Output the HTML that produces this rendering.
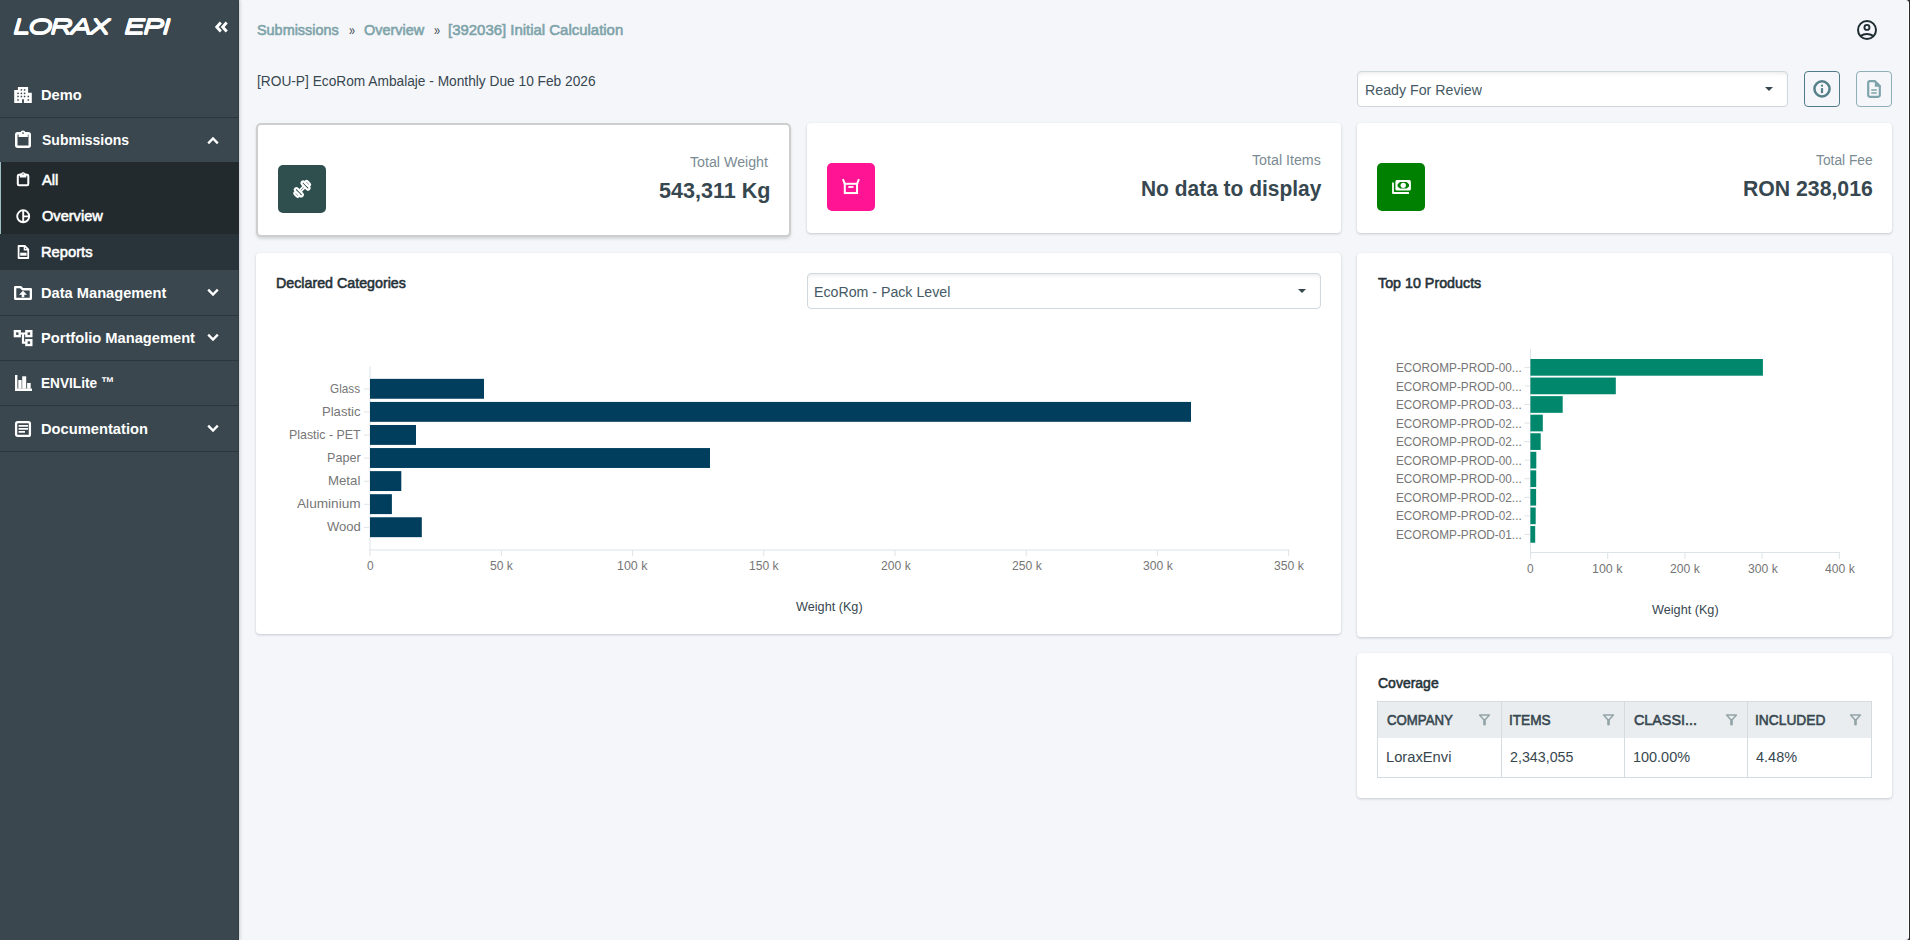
<!DOCTYPE html>
<html lang="en">
<head>
<meta charset="utf-8">
<title>LORAX EPI - Submission Overview</title>
<style>
*{box-sizing:border-box;margin:0;padding:0}
html,body{width:1910px;height:940px;overflow:hidden;background:#f5f6fa;font-family:"Liberation Sans",sans-serif}
body{position:relative}
.abs{position:absolute}
.t{position:absolute;white-space:nowrap;line-height:20px;transform-origin:0 50%;display:block}
svg{position:absolute;overflow:visible}
/* sidebar */
#side{position:absolute;left:0;top:0;width:239px;height:940px;background:#3a474e;box-shadow:inset -1px 0 0 rgba(20,30,36,.22),1px 0 3px rgba(40,50,60,.22)}
.sep{position:absolute;left:0;width:239px;height:1px;background:#2a373e}
#sub-active{position:absolute;left:0;top:162px;width:239px;height:72px;background:#232a2e;border-left:1px solid #9dbcc4}
#sub-rest{position:absolute;left:0;top:234px;width:239px;height:36px;background:#28333a}
/* cards */
.card{position:absolute;background:#fff;border-radius:4px;box-shadow:0 1px 3px rgba(60,70,90,.16),0 1px 2px rgba(60,70,90,.10)}
.card.sel{border:2px solid #cecece;border-radius:5px;box-shadow:0 2px 3px rgba(0,0,0,.13)}
.ico{position:absolute;width:48px;height:48px;border-radius:5px}
.select{position:absolute;height:36px;background:#fff;border:1px solid #cfd8dc;border-radius:4px;box-shadow:inset 0 3px 4px -2px rgba(0,0,0,.10)}
.caret{position:absolute;width:0;height:0;border-left:4.3px solid transparent;border-right:4.3px solid transparent;border-top:4.8px solid #37474f}
.btn{position:absolute;width:36px;height:36px;border-radius:4px;background:#f5f6fa}
/* table */
#tbl{position:absolute;left:1377px;top:701px;width:495px;height:77px;border:1px solid #d5dce0;background:#fff}
#tbl .hd{position:absolute;left:0;top:0;width:493px;height:36px;background:#e9edef}
#tbl .v{position:absolute;top:0;width:1px;height:75px;background:#d5dce0}
</style>
</head>
<body>

<!-- ================= SIDEBAR ================= -->
<nav id="side">
  <span class="t logo" style="left:12.91px;top:17px;font-size:22px;font-weight:normal;color:#ffffff;transform:scaleX(1.4282);font-style:italic;letter-spacing:-1.6px;text-shadow:0 .7px 0 #fff,0 -.7px 0 #fff;-webkit-text-stroke:0.3px #ffffff;">LORAX</span>
  <svg style="left:214px;top:20px" width="15" height="14" viewBox="0 0 15 14"><path d="M6.800 2.600 2.800 7l4 4.400M12.700 2.600 8.700 7l4 4.400" fill="none" stroke="#fff" stroke-width="2.900"/></svg>

  <!-- Demo -->
  <svg style="left:14px;top:87px" width="18" height="16" viewBox="0 0 18 16"><path d="M3.900 0h10.200v5.800h3.700V16H0.200V2.900h3.700z" fill="#fff"/><g fill="#3a474e"><rect x="6.65" y="2.15" width="1.500" height="1.500"/><rect x="9.85" y="2.15" width="1.500" height="1.500"/><rect x="3.25" y="5.65" width="1.500" height="1.500"/><rect x="6.65" y="5.65" width="1.500" height="1.500"/><rect x="9.85" y="5.65" width="1.500" height="1.500"/><rect x="3.25" y="8.75" width="1.500" height="1.500"/><rect x="6.65" y="8.75" width="1.500" height="1.500"/><rect x="9.85" y="8.75" width="1.500" height="1.500"/><rect x="13.55" y="8.75" width="1.500" height="1.500"/><rect x="3.25" y="12.25" width="1.500" height="1.500"/><rect x="13.55" y="12.25" width="1.500" height="1.500"/><rect x="8.100" y="12.200" width="1.800" height="3.800"/></g></svg>
  <span class="t" style="left:40.65px;top:85px;font-size:15.4px;font-weight:bold;color:#ffffff;transform:scaleX(0.9526);">Demo</span>
  <div class="sep" style="top:117px"></div>

  <!-- Submissions -->
  <svg style="left:15px;top:130px" width="16" height="18" viewBox="0 0 16 18"><rect x="1.250" y="3.150" width="13.500" height="13.600" rx="1.500" fill="none" stroke="#fff" stroke-width="2.500"/><path d="M3.600 2.400h1.800a2.700 2.700 0 0 1 5.200 0h2.200V7H3.600z" fill="#fff"/><circle cx="8" cy="3.100" r="0.850" fill="#3a474e"/></svg>
  <span class="t" style="left:41.60px;top:130px;font-size:15.4px;font-weight:bold;color:#ffffff;transform:scaleX(0.9094);">Submissions</span>
  <svg style="left:207px;top:136px" width="12" height="9" viewBox="0 0 12 9"><path d="M1.2 7.4 6 2.4l4.8 5" fill="none" stroke="#fff" stroke-width="2.3"/></svg>

  <div id="sub-active"></div>
  <div id="sub-rest"></div>
  <!-- All -->
  <svg style="left:16px;top:172px" width="14" height="14" viewBox="0 0 14 14"><rect x="1.800" y="2.800" width="10.500" height="10.400" rx="1.200" fill="none" stroke="#fff" stroke-width="2"/><path d="M3.800 1.400h1.400a2 2 0 0 1 3.700 0h1.400V5.600H3.800z" fill="#fff"/><circle cx="7.050" cy="2.100" r="0.650" fill="#232a2e"/></svg>
  <span class="t" style="left:41.59px;top:170px;font-size:15.4px;font-weight:normal;color:#ffffff;transform:scaleX(0.9546);-webkit-text-stroke:0.6px #ffffff;">All</span>
  <!-- Overview -->
  <svg style="left:16px;top:209px" width="15" height="15" viewBox="0 0 15 15"><circle cx="7.200" cy="7.300" r="6" fill="none" stroke="#fff" stroke-width="1.900"/><path d="M7.200 1.300v12M7.200 7.400h6" fill="none" stroke="#fff" stroke-width="1.900"/></svg>
  <span class="t" style="left:41.88px;top:206px;font-size:15.4px;font-weight:normal;color:#ffffff;transform:scaleX(0.9478);-webkit-text-stroke:0.6px #ffffff;">Overview</span>
  <!-- Reports -->
  <svg style="left:17px;top:245px" width="13" height="14" viewBox="0 0 13 14"><path d="M1.6 1h6.2l3.4 3.4V13H1.6z" fill="none" stroke="#fff" stroke-width="1.8" stroke-linejoin="round"/><path d="M7.4 1v3.8h3.8" fill="none" stroke="#fff" stroke-width="1.4"/><rect x="3.200" y="7.700" width="6.400" height="3" fill="#fff"/></svg>
  <span class="t" style="left:40.93px;top:242px;font-size:15.4px;font-weight:normal;color:#ffffff;transform:scaleX(0.9555);-webkit-text-stroke:0.6px #ffffff;">Reports</span>

  <!-- Data Management -->
  <svg style="left:14px;top:286px" width="18" height="14" viewBox="0 0 18 14"><path d="M1.150 1.150h5.500l2 2.100h8.200v9.600H1.150z" fill="none" stroke="#fff" stroke-width="2.300" stroke-linejoin="round"/><path d="M9 4.700l4 4.100h-2.700v2.400H7.700V8.800H5z" fill="#fff"/></svg>
  <span class="t" style="left:40.65px;top:283px;font-size:15.4px;font-weight:bold;color:#ffffff;transform:scaleX(0.9511);">Data Management</span>
  <svg style="left:207px;top:288px" width="12" height="9" viewBox="0 0 12 9"><path d="M1.2 1.6 6 6.6l4.8-5" fill="none" stroke="#fff" stroke-width="2.3"/></svg>
  <div class="sep" style="top:315px"></div>

  <!-- Portfolio Management -->
  <svg style="left:14px;top:330px" width="19" height="17" viewBox="0 0 19 17"><g fill="none" stroke="#fff" stroke-width="2.400"><rect x="0.900" y="1.200" width="4.800" height="4.900"/><rect x="12.400" y="1.200" width="4.900" height="4.900"/><rect x="12.400" y="10.200" width="4.900" height="4.800"/><path d="M6.500 3.500h5.500M9 3.500v9.200h3.200" stroke-width="2.200"/></g></svg>
  <span class="t" style="left:40.65px;top:328px;font-size:15.4px;font-weight:bold;color:#ffffff;transform:scaleX(0.9527);">Portfolio Management</span>
  <svg style="left:207px;top:333px" width="12" height="9" viewBox="0 0 12 9"><path d="M1.2 1.6 6 6.6l4.8-5" fill="none" stroke="#fff" stroke-width="2.3"/></svg>
  <div class="sep" style="top:360px"></div>

  <!-- ENVILite -->
  <svg style="left:14.500px;top:375px" width="18" height="17" viewBox="0 0 18 17"><path d="M1.200 0v14.800h15.800" fill="none" stroke="#fff" stroke-width="2.400"/><rect x="3.300" y="5" width="3.300" height="8.700" fill="#fff"/><rect x="7.200" y="1.300" width="4" height="12.400" fill="#fff"/><rect x="12.100" y="8" width="3.600" height="5.700" fill="#fff"/></svg>
  <span class="t" style="left:40.71px;top:373px;font-size:15.4px;font-weight:bold;color:#ffffff;transform:scaleX(0.8863);">ENVILite ™</span>
  <div class="sep" style="top:405px"></div>

  <!-- Documentation -->
  <svg style="left:15px;top:421px" width="16" height="16" viewBox="0 0 16 16"><rect x="1.100" y="1.200" width="13.800" height="13.700" rx="1.500" fill="none" stroke="#fff" stroke-width="2.300"/><path d="M3.600 4.900h9.400M3.600 7.900h9.400M3.600 10.900h6.400" fill="none" stroke="#fff" stroke-width="1.900"/></svg>
  <span class="t" style="left:40.65px;top:419px;font-size:15.4px;font-weight:bold;color:#ffffff;transform:scaleX(0.9547);">Documentation</span>
  <svg style="left:207px;top:424px" width="12" height="9" viewBox="0 0 12 9"><path d="M1.2 1.6 6 6.6l4.8-5" fill="none" stroke="#fff" stroke-width="2.3"/></svg>
  <div class="sep" style="top:451px"></div>
</nav>

<!-- ================= HEADER ================= -->
<header>
  <span class="t" style="left:257.28px;top:20px;font-size:15.4px;font-weight:normal;color:#7ea3a9;transform:scaleX(0.9359);-webkit-text-stroke:0.6px #7ea3a9;">Submissions</span><span class="t" style="left:348.70px;top:20px;font-size:15px;font-weight:normal;color:#37474f;transform:scaleX(0.7250);">»</span><span class="t" style="left:363.68px;top:20px;font-size:15.4px;font-weight:normal;color:#7ea3a9;transform:scaleX(0.9371);-webkit-text-stroke:0.6px #7ea3a9;">Overview</span><span class="t" style="left:434.10px;top:20px;font-size:15px;font-weight:normal;color:#37474f;transform:scaleX(0.7375);">»</span><span class="t" style="left:448.22px;top:20px;font-size:15.4px;font-weight:normal;color:#7ea3a9;transform:scaleX(0.9706);-webkit-text-stroke:0.6px #7ea3a9;">[392036] Initial Calculation</span>
  <svg style="left:1856px;top:19px" width="22" height="22" viewBox="0 0 22 22"><circle cx="11" cy="11" r="9" fill="none" stroke="#1f2d33" stroke-width="2"/><circle cx="10.950" cy="8.400" r="2.500" fill="none" stroke="#1f2d33" stroke-width="1.900"/><path d="M4.300 17.100Q10.950 12.700 17.600 17.100" fill="none" stroke="#1f2d33" stroke-width="2"/></svg>
  <span class="t" style="left:256.70px;top:71px;font-size:15.2px;font-weight:normal;color:#37474f;transform:scaleX(0.9033);">[ROU-P] EcoRom Ambalaje - Monthly Due 10 Feb 2026</span>
  <div class="select" style="left:1357px;top:71px;width:431px"></div>
  <span class="t" style="left:1365.26px;top:80px;font-size:15.2px;font-weight:normal;color:#455a64;transform:scaleX(0.9359);">Ready For Review</span>
  <div class="caret" style="left:1764.8px;top:87px"></div>
  <div class="btn" style="left:1804px;top:71px;border:1px solid #4f7c86"></div>
  <svg style="left:1812px;top:79px" width="20" height="20" viewBox="0 0 20 20"><circle cx="10" cy="9.900" r="7.550" fill="none" stroke="#55808a" stroke-width="2.500"/><rect x="8.900" y="9.100" width="2.200" height="5" fill="#55808a"/><circle cx="10" cy="6.650" r="1.150" fill="#55808a"/></svg>
  <div class="btn" style="left:1856px;top:71px;border:1px solid #8fb0b6"></div>
  <svg style="left:1866px;top:80px" width="16" height="18" viewBox="0 0 16 18"><path d="M3.600 1.200h5.400l4.800 4.800v9.200a1.600 1.600 0 0 1-1.600 1.600H3.800a1.600 1.600 0 0 1-1.600-1.600V2.800a1.600 1.600 0 0 1 1.400-1.600z" fill="none" stroke="#7ea4ab" stroke-width="2.200" stroke-linejoin="round"/><path d="M8.800 0.300l6 6v0.500h-6z" fill="#7ea4ab"/><path d="M5.200 9.900h5.600M5.200 13h5.600" stroke="#7ea4ab" stroke-width="1.500"/></svg>
</header>

<!-- ================= KPI CARDS ================= -->
<section class="card sel" style="left:256px;top:123px;width:535px;height:114px"></section>
<div class="ico" style="left:278px;top:165px;background:#2f4f4f"></div>
<svg style="left:293px;top:180px" width="18" height="18" viewBox="-9 -9 18 18"><g transform="translate(0.2 -0.1) rotate(-45) scale(1.09)" fill="none" stroke="#fff" stroke-width="2" stroke-linejoin="round"><rect x="-5.800" y="-4.600" width="2.900" height="9.200" rx="1.300"/><rect x="2.900" y="-4.600" width="2.900" height="9.200" rx="1.300"/><rect x="-8.300" y="-2.600" width="2.500" height="5.200" rx="1.100"/><rect x="5.800" y="-2.600" width="2.500" height="5.200" rx="1.100"/><path d="M-2.900 -1h5.800M-2.900 1h5.800" stroke-width="1.500"/></g></svg>
<span class="t" style="left:690.30px;top:152px;font-size:15.2px;font-weight:normal;color:#7b8b93;transform:scaleX(0.9361);">Total Weight</span><span class="t" style="left:658.90px;top:181px;font-size:22px;font-weight:bold;color:#37474f;transform:scaleX(0.9803);">543,311 Kg</span>

<section class="card" style="left:807px;top:123px;width:534px;height:110px"></section>
<div class="ico" style="left:827px;top:163px;background:#ff1493"></div>
<svg style="left:842px;top:178px" width="18" height="17" viewBox="0 0 18 17"><rect x="2.800" y="5.800" width="12.250" height="9.250" fill="none" stroke="#fff" stroke-width="2"/><path d="M2.900 6.200 0.900 1.100M14.950 6.200l2-5.100" fill="none" stroke="#fff" stroke-width="2"/><path d="M6.300 9h5.200" stroke="#fff" stroke-width="1.800"/></svg>
<span class="t" style="left:1252.10px;top:150px;font-size:15.2px;font-weight:normal;color:#7b8b93;transform:scaleX(0.9372);">Total Items</span><span class="t" style="left:1140.57px;top:179px;font-size:22.6px;font-weight:bold;color:#37474f;transform:scaleX(0.9267);">No data to display</span>

<section class="card" style="left:1357px;top:123px;width:535px;height:110px"></section>
<div class="ico" style="left:1377px;top:163px;background:#008000"></div>
<svg style="left:1391px;top:180px" width="21" height="14" viewBox="0 0 21 14"><rect x="4.400" y="0.100" width="15.500" height="10.500" rx="1.600" fill="#fff"/><path d="M9 2.100h6.600l2.400 2.100v2.200l-2.400 2.100H9L6.600 6.400V4.200z" fill="#008000"/><circle cx="12.250" cy="5.350" r="2.650" fill="#fff"/><path d="M2 2.500V13h16" fill="none" stroke="#fff" stroke-width="1.800" stroke-linejoin="round"/></svg>
<span class="t" style="left:1815.60px;top:150px;font-size:15.2px;font-weight:normal;color:#7b8b93;transform:scaleX(0.9077);">Total Fee</span><span class="t" style="left:1742.66px;top:179px;font-size:22.6px;font-weight:bold;color:#37474f;transform:scaleX(0.9393);">RON 238,016</span>

<!-- ================= DECLARED CATEGORIES ================= -->
<section class="card" style="left:256px;top:253px;width:1085px;height:381px"></section>
<span class="t" style="left:276.44px;top:273px;font-size:15.2px;font-weight:normal;color:#263238;transform:scaleX(0.9382);-webkit-text-stroke:0.6px #263238;">Declared Categories</span>
<div class="select" style="left:807px;top:273px;width:514px"></div>
<span class="t" style="left:814.47px;top:282px;font-size:15.2px;font-weight:normal;color:#455a64;transform:scaleX(0.9333);">EcoRom - Pack Level</span>
<div class="caret" style="left:1298px;top:289.200px"></div>
<svg style="left:256px;top:253px" width="1085" height="381" viewBox="256 253 1085 381">
  <g fill="#dde4e7">
    <rect x="369.500" y="366.500" width="1" height="189.500"/>
    <rect x="369.500" y="549.500" width="920" height="1"/>
    <rect x="364" y="388.40" width="5.500" height="1"/><rect x="364" y="411.47" width="5.500" height="1"/><rect x="364" y="434.54" width="5.500" height="1"/><rect x="364" y="457.61" width="5.500" height="1"/><rect x="364" y="480.68" width="5.500" height="1"/><rect x="364" y="503.75" width="5.500" height="1"/><rect x="364" y="526.82" width="5.500" height="1"/>
    <rect x="500.90" y="550" width="1" height="6"/><rect x="632.10" y="550" width="1" height="6"/><rect x="763.30" y="550" width="1" height="6"/><rect x="894.50" y="550" width="1" height="6"/><rect x="1025.70" y="550" width="1" height="6"/><rect x="1156.90" y="550" width="1" height="6"/><rect x="1288.10" y="550" width="1" height="6"/>
  </g>
  <g fill="#013d5c">
    <rect x="370" y="378.85" width="114.00" height="19.900"/>
    <rect x="370" y="401.92" width="821.00" height="19.900"/>
    <rect x="370" y="424.99" width="46.00" height="19.900"/>
    <rect x="370" y="448.06" width="340.00" height="19.900"/>
    <rect x="370" y="471.13" width="31.30" height="19.900"/>
    <rect x="370" y="494.20" width="21.90" height="19.900"/>
    <rect x="370" y="517.27" width="51.80" height="19.900"/>
  </g>
</svg>

<!-- ================= TOP 10 PRODUCTS ================= -->
<section class="card" style="left:1357px;top:253px;width:535px;height:384px"></section>
<span class="t" style="left:1378.28px;top:273px;font-size:15.2px;font-weight:normal;color:#263238;transform:scaleX(0.9408);-webkit-text-stroke:0.6px #263238;">Top 10 Products</span>
<svg style="left:1357px;top:253px" width="535" height="384" viewBox="1357 253 535 384">
  <g fill="#dde4e7">
    <rect x="1530" y="349" width="1" height="210"/>
    <rect x="1530" y="552" width="310" height="1"/>
    <rect x="1524.500" y="366.90" width="5.500" height="1"/><rect x="1524.500" y="385.46" width="5.500" height="1"/><rect x="1524.500" y="404.02" width="5.500" height="1"/><rect x="1524.500" y="422.58" width="5.500" height="1"/><rect x="1524.500" y="441.14" width="5.500" height="1"/><rect x="1524.500" y="459.70" width="5.500" height="1"/><rect x="1524.500" y="478.26" width="5.500" height="1"/><rect x="1524.500" y="496.82" width="5.500" height="1"/><rect x="1524.500" y="515.38" width="5.500" height="1"/><rect x="1524.500" y="533.94" width="5.500" height="1"/>
    <rect x="1607.20" y="553" width="1" height="6"/><rect x="1684.40" y="553" width="1" height="6"/><rect x="1761.60" y="553" width="1" height="6"/><rect x="1838.80" y="553" width="1" height="6"/>
  </g>
  <g fill="#00876c">
    <rect x="1530.400" y="359.00" width="232.50" height="16.700"/>
    <rect x="1530.400" y="377.56" width="85.40" height="16.700"/>
    <rect x="1530.400" y="396.12" width="32.30" height="16.700"/>
    <rect x="1530.400" y="414.68" width="12.40" height="16.700"/>
    <rect x="1530.400" y="433.24" width="10.30" height="16.700"/>
    <rect x="1530.400" y="451.80" width="5.90" height="16.700"/>
    <rect x="1530.400" y="470.36" width="5.80" height="16.700"/>
    <rect x="1530.400" y="488.92" width="5.70" height="16.700"/>
    <rect x="1530.400" y="507.48" width="5.30" height="16.700"/>
    <rect x="1530.400" y="526.04" width="4.80" height="16.700"/>
  </g>
</svg>

<!-- ================= COVERAGE ================= -->
<section class="card" style="left:1357px;top:653px;width:535px;height:145px"></section>
<span class="t" style="left:1378.08px;top:673px;font-size:15.2px;font-weight:normal;color:#263238;transform:scaleX(0.9211);-webkit-text-stroke:0.6px #263238;">Coverage</span>
<div id="tbl"><div class="hd"></div><div class="v" style="left:123px"></div><div class="v" style="left:246px"></div><div class="v" style="left:369px"></div></div>
<svg style="left:1478px;top:714px" width="12" height="12" viewBox="0 0 12 12"><path d="M1.600 1.100h9.800L6.500 6.600z" fill="none" stroke="#93a4a8" stroke-width="1.500" stroke-linejoin="round"/><path d="M5.150 6.200h2.700v4.400a1.350 0.900 0 0 1-2.700 0z" fill="#93a4a8"/></svg>
<svg style="left:1601.500px;top:714px" width="12" height="12" viewBox="0 0 12 12"><path d="M1.600 1.100h9.800L6.500 6.600z" fill="none" stroke="#93a4a8" stroke-width="1.500" stroke-linejoin="round"/><path d="M5.150 6.200h2.700v4.400a1.350 0.900 0 0 1-2.700 0z" fill="#93a4a8"/></svg>
<svg style="left:1724.700px;top:714px" width="12" height="12" viewBox="0 0 12 12"><path d="M1.600 1.100h9.800L6.500 6.600z" fill="none" stroke="#93a4a8" stroke-width="1.500" stroke-linejoin="round"/><path d="M5.150 6.200h2.700v4.400a1.350 0.900 0 0 1-2.700 0z" fill="#93a4a8"/></svg>
<svg style="left:1848.600px;top:714px" width="12" height="12" viewBox="0 0 12 12"><path d="M1.600 1.100h9.800L6.500 6.600z" fill="none" stroke="#93a4a8" stroke-width="1.500" stroke-linejoin="round"/><path d="M5.150 6.200h2.700v4.400a1.350 0.900 0 0 1-2.700 0z" fill="#93a4a8"/></svg>

<span class="t" style="left:1387.06px;top:710px;font-size:15.2px;font-weight:normal;color:#37474f;transform:scaleX(0.8709);-webkit-text-stroke:0.6px #37474f;">COMPANY</span>
<span class="t" style="left:1509.47px;top:710px;font-size:15.2px;font-weight:normal;color:#37474f;transform:scaleX(0.8980);-webkit-text-stroke:0.6px #37474f;">ITEMS</span>
<span class="t" style="left:1633.58px;top:710px;font-size:15.2px;font-weight:normal;color:#37474f;transform:scaleX(0.9430);-webkit-text-stroke:0.6px #37474f;">CLASSI...</span>
<span class="t" style="left:1755.46px;top:710px;font-size:15.2px;font-weight:normal;color:#37474f;transform:scaleX(0.9072);-webkit-text-stroke:0.6px #37474f;">INCLUDED</span>
<span class="t" style="left:1386.23px;top:747px;font-size:15.2px;font-weight:normal;color:#37474f;transform:scaleX(0.9688);">LoraxEnvi</span>
<span class="t" style="left:1509.80px;top:747px;font-size:15.2px;font-weight:normal;color:#37474f;transform:scaleX(0.9386);">2,343,055</span>
<span class="t" style="left:1632.75px;top:747px;font-size:15.2px;font-weight:normal;color:#37474f;transform:scaleX(0.9512);">100.00%</span>
<span class="t" style="left:1756.10px;top:747px;font-size:15.2px;font-weight:normal;color:#37474f;transform:scaleX(0.9540);">4.48%</span>
<span class="t" style="left:330.30px;top:379px;font-size:13.2px;font-weight:normal;color:#767676;transform:scaleX(0.8911);">Glass</span>
<span class="t" style="left:321.81px;top:402px;font-size:13.2px;font-weight:normal;color:#767676;transform:scaleX(0.9909);">Plastic</span>
<span class="t" style="left:289.16px;top:425px;font-size:13.2px;font-weight:normal;color:#767676;transform:scaleX(0.9394);">Plastic - PET</span>
<span class="t" style="left:326.55px;top:448px;font-size:13.2px;font-weight:normal;color:#767676;transform:scaleX(0.9541);">Paper</span>
<span class="t" style="left:328.30px;top:471px;font-size:13.2px;font-weight:normal;color:#767676;transform:scaleX(1.0026);">Metal</span>
<span class="t" style="left:297.00px;top:494px;font-size:13.2px;font-weight:normal;color:#767676;transform:scaleX(1.0345);">Aluminium</span>
<span class="t" style="left:327.20px;top:517px;font-size:13.2px;font-weight:normal;color:#767676;transform:scaleX(0.9889);">Wood</span>
<span class="t" style="left:367.05px;top:556px;font-size:13.2px;font-weight:normal;color:#767676;transform:scaleX(0.9000);">0</span>
<span class="t" style="left:490.40px;top:556px;font-size:13.2px;font-weight:normal;color:#767676;transform:scaleX(0.9158);">50 k</span>
<span class="t" style="left:617.36px;top:556px;font-size:13.2px;font-weight:normal;color:#767676;transform:scaleX(0.9411);">100 k</span>
<span class="t" style="left:748.93px;top:556px;font-size:13.2px;font-weight:normal;color:#767676;transform:scaleX(0.9189);">150 k</span>
<span class="t" style="left:880.55px;top:556px;font-size:13.2px;font-weight:normal;color:#767676;transform:scaleX(0.9214);">200 k</span>
<span class="t" style="left:1011.75px;top:556px;font-size:13.2px;font-weight:normal;color:#767676;transform:scaleX(0.9214);">250 k</span>
<span class="t" style="left:1142.95px;top:556px;font-size:13.2px;font-weight:normal;color:#767676;transform:scaleX(0.9214);">300 k</span>
<span class="t" style="left:1274.15px;top:556px;font-size:13.2px;font-weight:normal;color:#767676;transform:scaleX(0.9214);">350 k</span>
<span class="t" style="left:796.30px;top:597px;font-size:13.4px;font-weight:normal;color:#37474f;transform:scaleX(0.9458);">Weight (Kg)</span>
<span class="t" style="left:1396.11px;top:358px;font-size:13.2px;font-weight:normal;color:#767676;transform:scaleX(0.8934);">ECOROMP-PROD-00...</span>
<span class="t" style="left:1396.11px;top:377px;font-size:13.2px;font-weight:normal;color:#767676;transform:scaleX(0.8934);">ECOROMP-PROD-00...</span>
<span class="t" style="left:1396.11px;top:395px;font-size:13.2px;font-weight:normal;color:#767676;transform:scaleX(0.8934);">ECOROMP-PROD-03...</span>
<span class="t" style="left:1396.11px;top:414px;font-size:13.2px;font-weight:normal;color:#767676;transform:scaleX(0.8934);">ECOROMP-PROD-02...</span>
<span class="t" style="left:1396.11px;top:432px;font-size:13.2px;font-weight:normal;color:#767676;transform:scaleX(0.8934);">ECOROMP-PROD-02...</span>
<span class="t" style="left:1396.11px;top:451px;font-size:13.2px;font-weight:normal;color:#767676;transform:scaleX(0.8934);">ECOROMP-PROD-00...</span>
<span class="t" style="left:1396.11px;top:469px;font-size:13.2px;font-weight:normal;color:#767676;transform:scaleX(0.8934);">ECOROMP-PROD-00...</span>
<span class="t" style="left:1396.11px;top:488px;font-size:13.2px;font-weight:normal;color:#767676;transform:scaleX(0.8934);">ECOROMP-PROD-02...</span>
<span class="t" style="left:1396.11px;top:506px;font-size:13.2px;font-weight:normal;color:#767676;transform:scaleX(0.8934);">ECOROMP-PROD-02...</span>
<span class="t" style="left:1396.11px;top:525px;font-size:13.2px;font-weight:normal;color:#767676;transform:scaleX(0.8934);">ECOROMP-PROD-01...</span>
<span class="t" style="left:1527.35px;top:559px;font-size:13.2px;font-weight:normal;color:#767676;transform:scaleX(0.9000);">0</span>
<span class="t" style="left:1592.46px;top:559px;font-size:13.2px;font-weight:normal;color:#767676;transform:scaleX(0.9411);">100 k</span>
<span class="t" style="left:1670.45px;top:559px;font-size:13.2px;font-weight:normal;color:#767676;transform:scaleX(0.9214);">200 k</span>
<span class="t" style="left:1747.65px;top:559px;font-size:13.2px;font-weight:normal;color:#767676;transform:scaleX(0.9214);">300 k</span>
<span class="t" style="left:1824.85px;top:559px;font-size:13.2px;font-weight:normal;color:#767676;transform:scaleX(0.9214);">400 k</span>
<span class="t" style="left:1651.80px;top:600px;font-size:13.4px;font-weight:normal;color:#37474f;transform:scaleX(0.9458);">Weight (Kg)</span>
<span class="t logo" style="left:123.92px;top:17px;font-size:22px;font-weight:normal;color:#ffffff;transform:scaleX(1.4547);font-style:italic;letter-spacing:-1.6px;text-shadow:0 .7px 0 #fff,0 -.7px 0 #fff;-webkit-text-stroke:0.3px #ffffff;">EPI</span>

<!-- window edge -->
<div class="abs" style="left:1903px;top:0;width:7px;height:940px;background:#2a2a2a"></div>
<div class="abs" style="left:1898px;top:0;width:11px;height:940px;background:#f5f6fa;border-right:1px solid #fff;border-radius:0 3.500px 3.500px 0"></div>
</body>
</html>
